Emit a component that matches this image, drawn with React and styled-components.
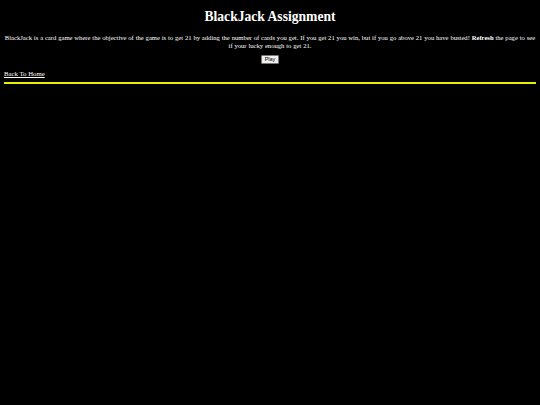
import React from "react";
import styled, { createGlobalStyle } from "styled-components";

const Global = createGlobalStyle`
  html, body { margin: 0; padding: 0; background: #000; }
  body { font-family: "Liberation Serif", "Times New Roman", serif; color: #fff; }
`;

const Page = styled.div`
  padding: 4px;
  background: #000;
  min-height: 397px;
`;

const Title = styled.h1`
  margin: 5px 0 0;
  font-size: 13.6px;
  font-weight: bold;
  text-align: center;
  line-height: 16px;
`;

const Intro = styled.p`
  margin: 9px 0 0;
  font-size: 6.62px;
  line-height: 7.5px;
  word-spacing: 0.2px;
  text-align: center;
`;

const Center = styled.div`
  display: flex;
  justify-content: center;
  margin-top: 6px;
`;

const PlayButton = styled.button`
  font-family: "Liberation Sans", Arial, sans-serif;
  font-size: 5.5px;
  padding: 0 3px;
  background: #efefef;
  color: #000;
  border: 1px solid #767676;
  border-radius: 1px;
  height: 9px;
  line-height: 7px;
`;

const HomeLink = styled.a`
  display: block;
  width: fit-content;
  margin-top: 6px;
  font-size: 6.75px;
  line-height: 8px;
  color: #fff;
  text-decoration: underline;
`;

const Rule = styled.hr`
  margin: 4px 0 0;
  border: none;
  height: 2px;
  background: #e8f000;
`;

export default function App() {
  return (
    <>
      <Global />
      <Page>
        <Title>BlackJack Assignment</Title>
        <Intro>
          BlackJack is a card game where the objective of the game is to get 21 by adding the number of cards you get. If you get 21 you win, but if you go above 21 you have busted! <b>Refresh</b> the page to see if your lucky enough to get 21.
        </Intro>
        <Center>
          <PlayButton>Play</PlayButton>
        </Center>
        <HomeLink href="#">Back To Home</HomeLink>
        <Rule />
      </Page>
    </>
  );
}
